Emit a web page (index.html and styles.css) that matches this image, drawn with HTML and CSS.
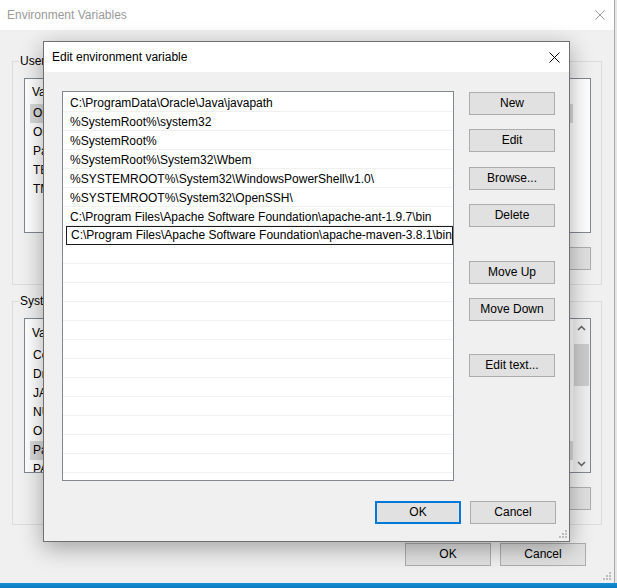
FILE: index.html
```html
<!DOCTYPE html>
<html>
<head>
<meta charset="utf-8">
<title>Edit environment variable</title>
<link rel="stylesheet" href="styles.css">
</head>
<body>
<div class="bgwin">
  <div class="bg-title">
    <span>Environment Variables</span>
    <svg class="x-icon" width="10" height="10" viewBox="0 0 10 10"><path d="M0.5 0.5 L9.5 9.5 M9.5 0.5 L0.5 9.5" stroke="#9a9a9a" stroke-width="1" fill="none"/></svg>
  </div>
  <div class="bg-body">
    <fieldset class="group first">
      <legend>User variables for user</legend>
      <div class="lv">
        <div class="lv-content">
          <div class="lv-head"><span class="c1">Variable</span><span>Value</span></div>
          <div class="lv-row sel"><span class="c1">OneDrive</span><span>C:\Users\user\OneDrive</span></div>
          <div class="lv-row"><span class="c1">OneDriveConsumer</span><span>C:\Users\user\OneDrive</span></div>
          <div class="lv-row"><span class="c1">Path</span><span>C:\Users\user\AppData\Local\Microsoft\WindowsApps;</span></div>
          <div class="lv-row"><span class="c1">TEMP</span><span>C:\Users\user\AppData\Local\Temp</span></div>
          <div class="lv-row"><span class="c1">TMP</span><span>C:\Users\user\AppData\Local\Temp</span></div>
        </div>
      </div>
      <div class="btnrow">
        <button class="btn">New...</button>
        <button class="btn">Edit...</button>
        <button class="btn">Delete</button>
      </div>
    </fieldset>
    <fieldset class="group second">
      <legend>System variables</legend>
      <div class="lv">
        <div class="lv-content">
          <div class="lv-head"><span class="c1">Variable</span><span>Value</span></div>
          <div class="lv-row"><span class="c1">ComSpec</span><span>C:\WINDOWS\system32\cmd.exe</span></div>
          <div class="lv-row"><span class="c1">DriverData</span><span>C:\Windows\System32\Drivers\DriverData</span></div>
          <div class="lv-row"><span class="c1">JAVA_HOME</span><span>C:\Program Files\Java\jdk1.8.0</span></div>
          <div class="lv-row"><span class="c1">NUMBER_OF_PROCESSORS</span><span>4</span></div>
          <div class="lv-row"><span class="c1">OS</span><span>Windows_NT</span></div>
          <div class="lv-row sel"><span class="c1">Path</span><span>C:\ProgramData\Oracle\Java\javapath;</span></div>
          <div class="lv-row"><span class="c1">PATHEXT</span><span>.COM;.EXE;.BAT;.CMD</span></div>
        </div>
        <div class="vscroll">
          <div class="sb-arrow"><svg width="9" height="6" viewBox="0 0 9 6"><path d="M1 5 L4.5 1.5 L8 5" stroke="#606060" stroke-width="1.5" fill="none"/></svg></div>
          <div class="sb-track"><div class="sb-thumb"></div></div>
          <div class="sb-arrow"><svg width="9" height="6" viewBox="0 0 9 6"><path d="M1 1 L4.5 4.5 L8 1" stroke="#606060" stroke-width="1.5" fill="none"/></svg></div>
        </div>
      </div>
      <div class="btnrow">
        <button class="btn">New...</button>
        <button class="btn">Edit...</button>
        <button class="btn">Delete</button>
      </div>
    </fieldset>
    <div class="btnrow main">
      <button class="btn">OK</button>
      <button class="btn">Cancel</button>
    </div>
    <svg class="grip bg-grip" width="8" height="8" viewBox="0 0 8 8"><g fill="#bdbdbd"><rect x="6" y="0" width="2" height="2"/><rect x="3" y="3" width="2" height="2"/><rect x="6" y="3" width="2" height="2"/><rect x="0" y="6" width="2" height="2"/><rect x="3" y="6" width="2" height="2"/><rect x="6" y="6" width="2" height="2"/></g></svg>
  </div>
</div>
<div class="taskbar"></div>

<div class="dialog">
  <div class="dlg-title">
    <span>Edit environment variable</span>
    <svg class="x-icon" width="11" height="11" viewBox="0 0 11 11"><path d="M0.5 0.5 L10.5 10.5 M10.5 0.5 L0.5 10.5" stroke="#000" stroke-width="1" fill="none"/></svg>
  </div>
  <div class="dlg-body">
    <div class="dlg-main">
      <div class="pathlist">
        <div class="prow">C:\ProgramData\Oracle\Java\javapath</div>
        <div class="prow">%SystemRoot%\system32</div>
        <div class="prow">%SystemRoot%</div>
        <div class="prow">%SystemRoot%\System32\Wbem</div>
        <div class="prow">%SYSTEMROOT%\System32\WindowsPowerShell\v1.0\</div>
        <div class="prow">%SYSTEMROOT%\System32\OpenSSH\</div>
        <div class="prow">C:\Program Files\Apache Software Foundation\apache-ant-1.9.7\bin</div>
        <div class="prow editing"><div class="editbox">C:\Program Files\Apache Software Foundation\apache-maven-3.8.1\bin<span class="caret"></span></div></div>
        <div class="prow"></div>
        <div class="prow"></div>
        <div class="prow"></div>
        <div class="prow"></div>
        <div class="prow"></div>
        <div class="prow"></div>
        <div class="prow"></div>
        <div class="prow"></div>
        <div class="prow"></div>
        <div class="prow"></div>
        <div class="prow"></div>
        <div class="prow"></div>
        <div class="prow"></div>
      </div>
      <div class="side">
        <button class="btn b-new">New</button>
        <button class="btn b-edit">Edit</button>
        <button class="btn b-browse">Browse...</button>
        <button class="btn b-delete">Delete</button>
        <button class="btn b-up">Move Up</button>
        <button class="btn b-down">Move Down</button>
        <button class="btn b-text">Edit text...</button>
      </div>
    </div>
    <div class="dlg-foot">
      <button class="btn default">OK</button>
      <button class="btn">Cancel</button>
    </div>
  </div>
  <svg class="grip dlg-grip" width="8" height="8" viewBox="0 0 8 8"><g fill="#bdbdbd"><rect x="6" y="0" width="2" height="2"/><rect x="3" y="3" width="2" height="2"/><rect x="6" y="3" width="2" height="2"/><rect x="0" y="6" width="2" height="2"/><rect x="3" y="6" width="2" height="2"/><rect x="6" y="6" width="2" height="2"/></g></svg>
</div>
</body>
</html>
```

FILE: styles.css
```css
* { box-sizing: border-box; }
html, body { margin: 0; padding: 0; }
body {
  width: 617px;
  height: 588px;
  overflow: hidden;
  position: relative;
  background: #e6e6e6;
  font-family: "Liberation Sans", sans-serif;
  font-size: 12px;
  color: #000;
}

/* background window */
.bgwin {
  width: 615px;
  height: 583px;
  background: #f0f0f0;
  border-right: 1px solid #a9a9a9;
  display: flex;
  flex-direction: column;
}
.bg-title {
  height: 30px;
  flex: none;
  background: #fff;
  color: #9a9a9a;
  display: flex;
  align-items: center;
  justify-content: space-between;
  padding: 0 9px 0 7px;
}
.bg-body {
  flex: 1;
  position: relative;
  padding: 23px 12px 0 12px;
  display: flex;
  flex-direction: column;
}
.group {
  margin: 0;
  width: 590px;
  min-width: 0;
  border: 1px solid #dcdcdc;
  padding: 9px 10px 14px 11px;
}
.group.second { margin-top: 8px; }
.group legend {
  padding: 0 1px;
  margin-left: -5px;
  line-height: 16px;
}
.lv {
  height: 155px;
  border: 1px solid #828790;
  background: #fff;
  overflow: hidden;
  display: flex;
}
.lv-content { flex: 1; min-width: 0; }
.lv-head {
  height: 25px;
  display: flex;
  align-items: center;
  padding-left: 7px;
}
.second .lv-head { height: 27px; }
.lv-row {
  height: 19px;
  line-height: 19px;
  margin-left: 5px;
  padding-left: 3px;
  display: flex;
  white-space: nowrap;
}
.first .lv-row { margin-right: 17px; }
.lv-row.sel { background: #d9d9d9; }
.c1 { width: 160px; flex: none; }
.vscroll {
  width: 17px;
  flex: none;
  background: #f0f0f0;
  display: flex;
  flex-direction: column;
}
.sb-arrow {
  height: 17px;
  display: flex;
  align-items: center;
  justify-content: center;
}
.sb-track { flex: 1; padding-top: 8px; }
.sb-thumb { height: 42px; margin: 0 1px; background: #cdcdcd; }

.btnrow {
  display: flex;
  justify-content: flex-end;
  gap: 9px;
  margin-top: 14px;
}
.btnrow.main { margin-top: 18px; margin-right: 16px; }
.btn {
  width: 86px;
  height: 23px;
  padding: 0;
  margin: 0;
  background: #e1e1e1;
  border: 1px solid #adadad;
  border-radius: 0;
  font-family: inherit;
  font-size: 12px;
  color: #000;
  line-height: 21px;
}
.grip { position: absolute; }
.bg-grip { right: 3px; bottom: 3px; }
.taskbar {
  height: 5px;
  background: linear-gradient(#1590d6, #0b78bb);
}

/* foreground dialog */
.dialog {
  position: absolute;
  left: 43px;
  top: 41px;
  width: 527px;
  height: 501px;
  border: 1px solid #707070;
  background: #f0f0f0;
  box-shadow: 0 6px 22px rgba(0, 0, 0, 0.33);
  display: flex;
  flex-direction: column;
}
.dlg-title {
  height: 30px;
  flex: none;
  background: #fff;
  display: flex;
  align-items: center;
  justify-content: space-between;
  padding: 0 9px 0 8px;
}
.dlg-body {
  flex: 1;
  padding: 19px 13px 17px 18px;
  display: flex;
  flex-direction: column;
}
.dlg-main { display: flex; gap: 15px; }
.pathlist {
  width: 392px;
  height: 390px;
  border: 1px solid #828790;
  background: #fff;
  padding-top: 1px;
  overflow: hidden;
}
.prow {
  height: 19px;
  border-bottom: 1px solid #f0f0f0;
  padding-left: 7px;
  padding-top: 2px;
  line-height: 17px;
  white-space: nowrap;
}
.prow.editing {
  border-bottom: none;
  padding: 0 0 0 3px;
}
.editbox {
  height: 19px;
  border: 1px solid #1b1b1b;
  padding: 0 0 0 4px;
  line-height: 17px;
  white-space: nowrap;
  overflow: hidden;
}
.caret {
  display: inline-block;
  width: 1px;
  height: 14px;
  background: #000;
  vertical-align: -3px;
}
.side { display: flex; flex-direction: column; }
.b-new { margin-top: 1px; }
.b-edit { margin-top: 14px; }
.b-browse { margin-top: 15px; }
.b-delete { margin-top: 14px; }
.b-up { margin-top: 34px; }
.b-down { margin-top: 14px; }
.b-text { margin-top: 33px; }
.dlg-foot {
  display: flex;
  justify-content: flex-end;
  gap: 9px;
  margin-top: 20px;
}
.btn.default { border: 2px solid #0078d7; line-height: 19px; }
.dlg-grip { right: 2px; bottom: 3px; }
```
